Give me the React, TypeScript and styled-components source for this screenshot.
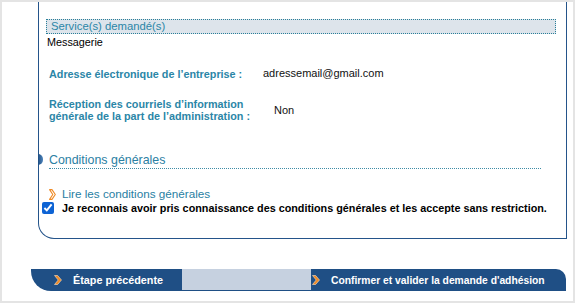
import * as React from 'react'
import styled, { createGlobalStyle } from 'styled-components'

const GlobalStyle = createGlobalStyle`
  html, body {
    margin: 0;
    padding: 0;
    background: #fff;
  }
  body {
    font-family: 'Liberation Sans', Arial, sans-serif;
  }
`

const teal = '#2b86a7'
const navy = '#1f4f85'
const orange = '#ef8a25'

const Frame = styled.div`
  width: 575px;
  height: 303px;
  box-sizing: border-box;
  border: 2px solid #e4e4e4;
  background: #fff;
  overflow: hidden;
  display: flex;
  flex-direction: column;
`

const Panel = styled.div`
  margin-left: 36px;
  width: 529px;
  box-sizing: border-box;
  border: 1px solid #24548a;
  border-top: none;
  border-bottom-left-radius: 16px;
  padding: 17px 10px 23px 0;
  display: flex;
  flex-direction: column;
`

const SectionTitle = styled.div`
  margin-left: 7px;
  padding-left: 4px;
  border: 1px dotted #2a7f99;
  background: #dde4eb;
  color: ${teal};
  font-size: 11.3px;
  line-height: 13px;
`

const PlainText = styled.div`
  margin: 1px 0 0 8px;
  color: #000;
  font-size: 10.8px;
  line-height: 14px;
`

const InfoRow = styled.div<{ $top: number }>`
  margin-top: ${({ $top }) => $top}px;
  padding-left: 10px;
  display: grid;
  grid-template-columns: 214px 1fr;
  align-items: center;
`

const Label = styled.div`
  color: ${teal};
  font-weight: bold;
  font-size: 10.8px;
  line-height: 12px;
`

const Value = styled.div<{ $indent?: number }>`
  padding-left: ${({ $indent }) => $indent || 0}px;
  color: #111;
  font-size: 11px;
  line-height: 13px;
`

const Heading = styled.div`
  position: relative;
  margin: 31px 15px 0 10px;
  color: #2a80a3;
  font-size: 12.4px;
  line-height: 15px;
  border-bottom: 1px dotted #3f8ca6;
`

const Bullet = styled.span`
  position: absolute;
  left: -11px;
  top: 1px;
  width: 5px;
  height: 11px;
  border-radius: 0 6px 6px 0;
  background: linear-gradient(90deg, #1d4d82, #4f86bd);
`

const LinkRow = styled.div`
  margin: 18px 0 0 10px;
  display: flex;
  align-items: center;
  gap: 6px;
  height: 14px;
`

const Link = styled.a`
  color: #2880a3;
  font-size: 11.7px;
  line-height: 14px;
  text-decoration: none;
`

const CheckRow = styled.label`
  margin-left: 3px;
  height: 14px;
  display: flex;
  align-items: center;
  gap: 8px;
  color: #000;
  font-weight: bold;
  font-size: 10.8px;
`

const Check = styled.input`
  margin: 0;
  width: 12px;
  height: 12px;
  accent-color: #0d63d4;
`

const NavBar = styled.div`
  margin: 30px 0 0 29px;
  width: 535px;
  height: 22px;
  display: flex;
`

const NavButton = styled.div<{ $width: number; $side: 'left' | 'right' }>`
  width: ${({ $width }) => $width}px;
  box-sizing: border-box;
  display: flex;
  align-items: center;
  gap: 11px;
  padding-left: ${({ $side }) => ($side === 'left' ? 23 : 1)}px;
  background: ${navy};
  color: #fff;
  font-weight: bold;
  font-size: ${({ $side }) => ($side === 'left' ? 10.8 : 10.3)}px;
  border-radius: ${({ $side }) => ($side === 'left' ? '0 0 0 20px' : '0 10px 0 0')};
`

const NavFiller = styled.div`
  flex: 1;
  background: #c6d1e0;
  border-bottom: 1px solid ${navy};
`

function OutlineChevron() {
  return (
    <svg width="7" height="11" viewBox="0 0 7 11">
      <path
        d="M0.6 0.6 H3 L6.3 5.5 L3 10.4 H0.6 L3.8 5.5 Z"
        fill="#fff"
        stroke={orange}
        strokeWidth="1.1"
        strokeLinejoin="round"
      />
    </svg>
  )
}

function SolidChevron() {
  return (
    <svg width="8" height="10" viewBox="0 0 8 10">
      <path d="M0.5 0.5 H3.6 L7.5 5 L3.6 9.5 H0.5 L4.2 5 Z" fill={orange} stroke="#fbe2c8" strokeWidth="0.6" />
    </svg>
  )
}

export default function App() {
  return (
    <>
      <GlobalStyle />
      <Frame>
        <Panel>
          <SectionTitle>Service(s) demandé(s)</SectionTitle>
          <PlainText>Messagerie</PlainText>

          <InfoRow $top={18}>
            <Label>Adresse électronique de l’entreprise :</Label>
            <Value>adressemail@gmail.com</Value>
          </InfoRow>

          <InfoRow $top={18}>
            <Label>
              Réception des courriels d’information
              <br />
              générale de la part de l’administration :
            </Label>
            <Value $indent={11}>Non</Value>
          </InfoRow>

          <Heading>
            <Bullet />
            Conditions générales
          </Heading>

          <LinkRow>
            <OutlineChevron />
            <Link href="#">Lire les conditions générales</Link>
          </LinkRow>

          <CheckRow>
            <Check type="checkbox" defaultChecked />
            Je reconnais avoir pris connaissance des conditions générales et les accepte sans restriction.
          </CheckRow>
        </Panel>

        <NavBar>
          <NavButton $width={151} $side="left">
            <SolidChevron />
            Étape précédente
          </NavButton>
          <NavFiller />
          <NavButton $width={255} $side="right">
            <SolidChevron />
            Confirmer et valider la demande d'adhésion
          </NavButton>
        </NavBar>
      </Frame>
    </>
  )
}
